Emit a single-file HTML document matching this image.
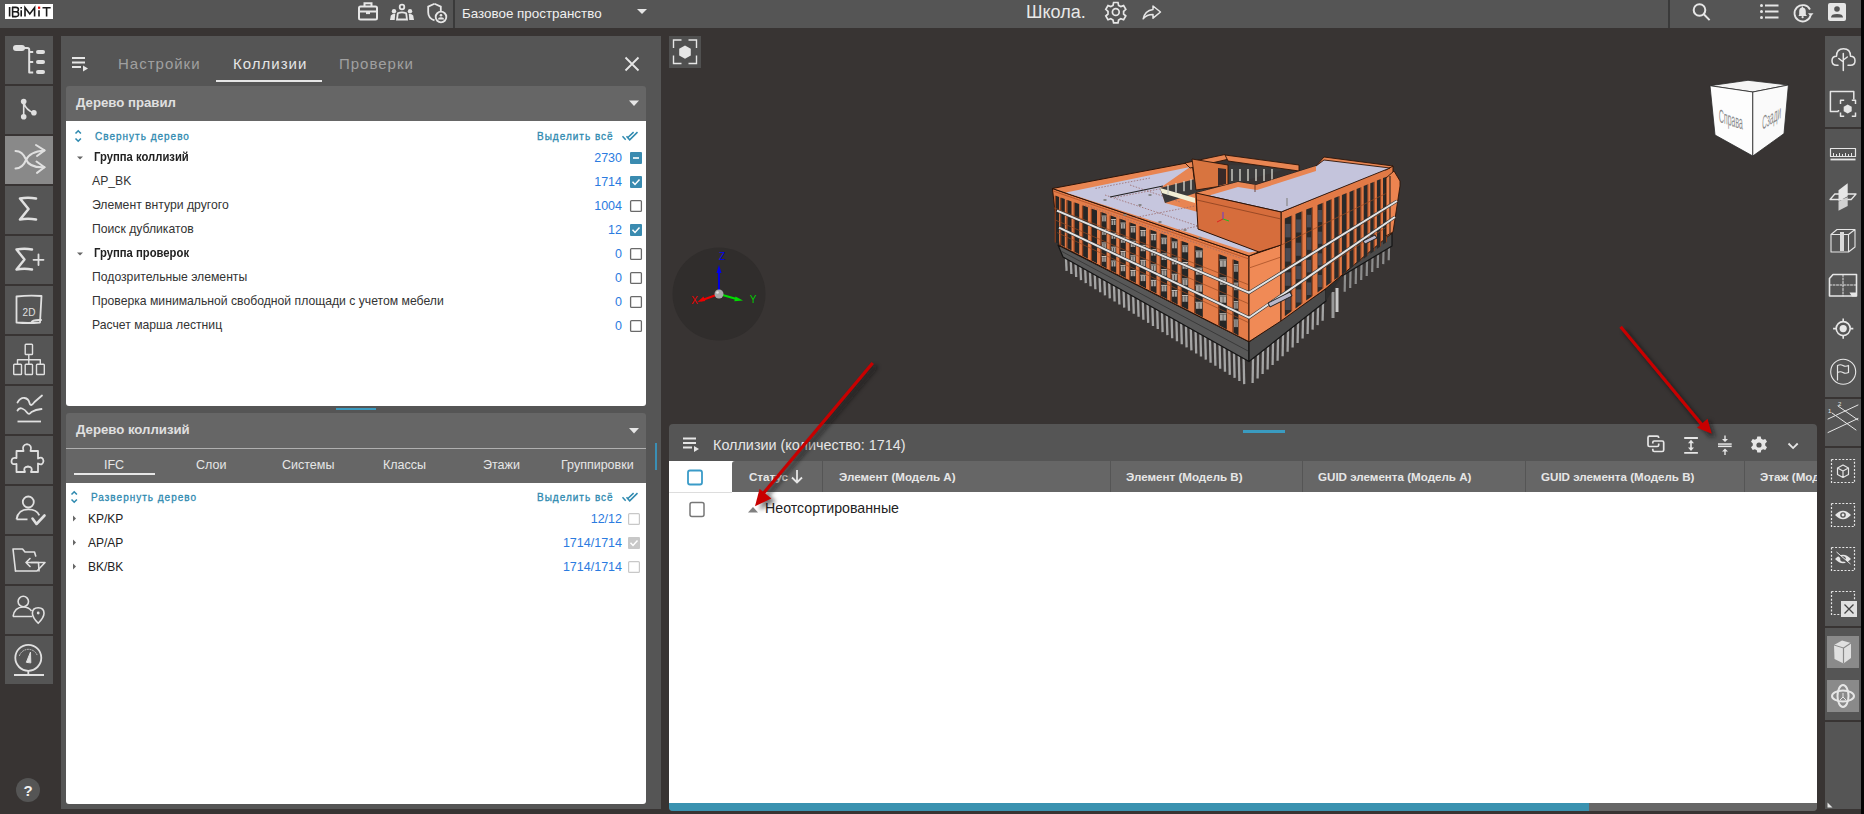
<!DOCTYPE html>
<html><head><meta charset="utf-8">
<style>
*{box-sizing:border-box;margin:0;padding:0}
html,body{width:1864px;height:814px;overflow:hidden}
body{position:relative;background:#383433;font-family:"Liberation Sans",sans-serif;}
.a{position:absolute}
.t{position:absolute;white-space:nowrap;line-height:1}
#top{left:0;top:0;width:1861px;height:28px;background:#555}
#rstrip{left:1861px;top:0;width:3px;height:814px;background:#050505}
.lb{position:absolute;left:5px;width:48px;height:48px;background:#555}
.rb{position:absolute;left:1825px;width:36px;background:#555}
svg{position:absolute;overflow:visible}
</style></head><body>
<div id="top" class="a"></div>
<div id="rstrip" class="a"></div>


<!-- topbar content -->
<div class="a" style="left:5px;top:4px;width:48px;height:15px;background:#fff"></div>
<div class="a" style="left:453px;top:0;width:2px;height:28px;background:#3a3a3a"></div>
<div class="t" style="left:462px;top:7px;font-size:13.4px;color:#f0f0f0">Базовое пространство</div>
<div class="t" style="left:1026px;top:3px;font-size:18px;color:#e8e8e8">Школа.</div>
<div class="a" style="left:1668px;top:0;width:2px;height:28px;background:#3a3a3a"></div>

<!-- left sidebar -->
<div class="lb" style="top:36px"></div>
<div class="lb" style="top:86px"></div>
<div class="lb" style="top:136px;background:#898989"></div>
<div class="lb" style="top:186px"></div>
<div class="lb" style="top:236px"></div>
<div class="lb" style="top:286px"></div>
<div class="lb" style="top:336px"></div>
<div class="lb" style="top:386px"></div>
<div class="lb" style="top:436px"></div>
<div class="lb" style="top:486px"></div>
<div class="lb" style="top:536px"></div>
<div class="lb" style="top:586px"></div>
<div class="lb" style="top:636px"></div>
<div class="a" style="left:16px;top:778px;width:24px;height:24px;border-radius:50%;background:#555"></div>

<!-- left panel -->
<div class="a" style="left:61px;top:36px;width:600px;height:773px;background:#555"></div>
<div class="a" style="left:66px;top:86px;width:580px;height:35px;background:#666;border-radius:3px 3px 0 0"></div>
<div class="a" style="left:66px;top:121px;width:580px;height:285px;background:#fff;border-radius:0 0 3px 3px"></div>
<div class="a" style="left:66px;top:413px;width:580px;height:70px;background:#666;border-radius:3px 3px 0 0"></div>
<div class="a" style="left:66px;top:448px;width:580px;height:1px;background:#b0b0b0"></div>
<div class="a" style="left:66px;top:483px;width:580px;height:321px;background:#fff;border-radius:0 0 3px 3px"></div>


<!-- left panel text -->
<div class="t" style="left:118px;top:56px;font-size:15px;color:#a0a0a0;letter-spacing:1px">Настройки</div>
<div class="t" style="left:233px;top:56px;font-size:15px;color:#e6e6e6;letter-spacing:1px">Коллизии</div>
<div class="t" style="left:339px;top:56px;font-size:15px;color:#a0a0a0;letter-spacing:1px">Проверки</div>
<div class="a" style="left:216px;top:80px;width:106px;height:2px;background:#e6e6e6"></div>
<div class="t" style="left:76px;top:96px;font-size:13.2px;font-weight:bold;color:#e0e0e0">Дерево правил</div>
<div class="t" style="left:95px;top:132px;font-size:10px;color:#2f8ab0;letter-spacing:1px;-webkit-text-stroke:0.3px #2f8ab0">Свернуть дерево</div>
<div class="t" style="left:537px;top:132px;font-size:10px;color:#2f8ab0;letter-spacing:1px;-webkit-text-stroke:0.3px #2f8ab0">Выделить всё</div>
<div class="t" style="left:94px;top:151px;font-size:12.6px;font-weight:bold;color:#222;transform:scaleX(0.895);transform-origin:0 0">Группа коллизий</div>
<div class="t" style="left:92px;top:175px;font-size:12.2px;color:#333">AP_BK</div>
<div class="t" style="left:92px;top:199px;font-size:12.2px;color:#333">Элемент внтури другого</div>
<div class="t" style="left:92px;top:223px;font-size:12.2px;color:#333">Поиск дубликатов</div>
<div class="t" style="left:94px;top:247px;font-size:12.6px;font-weight:bold;color:#222;transform:scaleX(0.895);transform-origin:0 0">Группа проверок</div>
<div class="t" style="left:92px;top:271px;font-size:12.2px;color:#333">Подозрительные элементы</div>
<div class="t" style="left:92px;top:295px;font-size:12.2px;color:#333">Проверка минимальной свободной площади с учетом мебели</div>
<div class="t" style="left:92px;top:319px;font-size:12.2px;color:#333">Расчет марша лестниц</div>
<div class="t" style="left:522px;top:152px;width:100px;text-align:right;font-size:12.5px;color:#2b7be0">2730</div>
<div class="t" style="left:522px;top:176px;width:100px;text-align:right;font-size:12.5px;color:#2b7be0">1714</div>
<div class="t" style="left:522px;top:200px;width:100px;text-align:right;font-size:12.5px;color:#2b7be0">1004</div>
<div class="t" style="left:522px;top:224px;width:100px;text-align:right;font-size:12.5px;color:#2b7be0">12</div>
<div class="t" style="left:522px;top:248px;width:100px;text-align:right;font-size:12.5px;color:#2b7be0">0</div>
<div class="t" style="left:522px;top:272px;width:100px;text-align:right;font-size:12.5px;color:#2b7be0">0</div>
<div class="t" style="left:522px;top:296px;width:100px;text-align:right;font-size:12.5px;color:#2b7be0">0</div>
<div class="t" style="left:522px;top:320px;width:100px;text-align:right;font-size:12.5px;color:#2b7be0">0</div>
<div class="a" style="left:336px;top:408px;width:40px;height:2px;background:#3a9bc0"></div>
<div class="t" style="left:76px;top:423px;font-size:13.2px;font-weight:bold;color:#e0e0e0">Дерево коллизий</div>
<div class="t" style="left:104px;top:459px;font-size:12.5px;color:#e6e6e6">IFC</div>
<div class="t" style="left:196px;top:459px;font-size:12.5px;color:#e6e6e6">Слои</div>
<div class="t" style="left:282px;top:459px;font-size:12.5px;color:#e6e6e6">Системы</div>
<div class="t" style="left:383px;top:459px;font-size:12.5px;color:#e6e6e6">Классы</div>
<div class="t" style="left:483px;top:459px;font-size:12.5px;color:#e6e6e6">Этажи</div>
<div class="t" style="left:561px;top:459px;font-size:12.5px;color:#e6e6e6">Группировки</div>
<div class="a" style="left:74px;top:473px;width:81px;height:2px;background:#e6e6e6"></div>
<div class="t" style="left:91px;top:493px;font-size:10px;color:#2f8ab0;letter-spacing:1px;-webkit-text-stroke:0.3px #2f8ab0">Развернуть дерево</div>
<div class="t" style="left:537px;top:493px;font-size:10px;color:#2f8ab0;letter-spacing:1px;-webkit-text-stroke:0.3px #2f8ab0">Выделить всё</div>
<div class="t" style="left:88px;top:513px;font-size:12px;color:#222">KP/KP</div>
<div class="t" style="left:88px;top:537px;font-size:12px;color:#222">AP/AP</div>
<div class="t" style="left:88px;top:561px;font-size:12px;color:#222">BK/BK</div>
<div class="t" style="left:522px;top:513px;width:100px;text-align:right;font-size:12.5px;color:#2b7be0">12/12</div>
<div class="t" style="left:522px;top:537px;width:100px;text-align:right;font-size:12.5px;color:#2b7be0">1714/1714</div>
<div class="t" style="left:522px;top:561px;width:100px;text-align:right;font-size:12.5px;color:#2b7be0">1714/1714</div>
<div class="a" style="left:655px;top:443px;width:2px;height:27px;background:#3a8fb5"></div>

<!-- viewer buttons -->
<div class="a" style="left:669px;top:36px;width:32px;height:32px;background:#505050"></div>

<!-- table -->
<div class="a" style="left:669px;top:424px;width:1148px;height:387px;background:#555;border-radius:4px 4px 4px 4px;overflow:hidden">
  <div class="a" style="left:0;top:37px;width:1148px;height:342px;background:#fff"></div>
  <div class="a" style="left:63px;top:37px;width:1085px;height:31px;background:#666;border-radius:3px 0 0 0"></div>
  <div class="a" style="left:0;top:68px;width:63px;height:1px;background:#ddd"></div>
  <div class="t" style="left:44px;top:14px;font-size:14.4px;color:#e6e6e6">Коллизии (количество: 1714)</div>
  <div class="t" style="left:80px;top:47px;font-size:11.6px;font-weight:bold;color:#e6e6e6">Статус</div>
  <div class="a" style="left:153px;top:37px;width:1px;height:31px;background:#555"></div>
  <div class="t" style="left:170px;top:47px;font-size:11.6px;font-weight:bold;color:#e6e6e6">Элемент (Модель А)</div>
  <div class="a" style="left:441px;top:37px;width:1px;height:31px;background:#555"></div>
  <div class="t" style="left:457px;top:47px;font-size:11.6px;font-weight:bold;color:#e6e6e6">Элемент (Модель B)</div>
  <div class="a" style="left:633px;top:37px;width:1px;height:31px;background:#555"></div>
  <div class="t" style="left:649px;top:47px;font-size:11.6px;font-weight:bold;color:#e6e6e6">GUID элемента (Модель А)</div>
  <div class="a" style="left:856px;top:37px;width:1px;height:31px;background:#555"></div>
  <div class="t" style="left:872px;top:47px;font-size:11.6px;font-weight:bold;color:#e6e6e6">GUID элемента (Модель B)</div>
  <div class="a" style="left:1075px;top:37px;width:1px;height:31px;background:#555"></div>
  <div class="t" style="left:1091px;top:47px;font-size:11.6px;font-weight:bold;color:#e6e6e6">Этаж (Модель А)</div>
  <div class="t" style="left:96px;top:77px;font-size:14.2px;color:#222">Неотсортированные</div>

  <div class="a" style="left:0;top:379px;width:1148px;height:8px;background:#666"></div>
  <div class="a" style="left:0;top:379px;width:920px;height:8px;background:#3a92b0"></div>
</div>

<!-- right sidebar -->
<div class="rb" style="top:36px;height:91px"></div>
<div class="rb" style="top:129px;height:268px"></div>
<div class="rb" style="top:399px;height:47px"></div>
<div class="rb" style="top:448px;height:178px"></div>
<div class="rb" style="top:628px;height:92px"></div>
<div class="rb" style="top:722px;height:87px"></div>


<svg id="ov" style="left:0;top:0" width="1864" height="814" viewBox="0 0 1864 814">
<defs>
  <filter id="ash" x="-20%" y="-20%" width="140%" height="140%"><feGaussianBlur stdDeviation="2.2"/></filter>
</defs>
<!-- ===== TOP BAR ICONS ===== -->
<g fill="none" stroke="#e6e6e6" stroke-width="2">
  <!-- briefcase -->
  <rect x="359" y="6.5" width="18" height="13" rx="1.5"/>
  <path d="M364.5 6.5V3.2h7V6.5"/>
  <path d="M359 11.5h18"/>
  <rect x="366" y="11.5" width="4" height="2.6" fill="#e6e6e6" stroke="none"/>
  <!-- people -->
  <circle cx="402" cy="7" r="2.3" stroke-width="1.8"/>
  <path d="M397 19.5l0.8-6.2q4.2-2 8.4 0l0.8 6.2z" stroke-width="1.8"/>
  <!-- shield -->
  <path d="M434.5 3.8l-6.3 2.8v5.6c0 4 2.7 7 6.3 8.2" stroke-width="1.8"/>
  <path d="M434.5 3.8l6.3 2.8v4.6" stroke-width="1.8"/>
  <circle cx="441" cy="17" r="5.3" stroke-width="1.8"/>
  <!-- gear outline -->
  <path d="M1113.6 2.5h4.4l0.6 2.9 2.2 1.2 2.8-1 2.2 3.8-2.2 2v2.6l2.2 2-2.2 3.8-2.8-1-2.2 1.2-0.6 2.9h-4.4l-0.6-2.9-2.2-1.2-2.8 1-2.2-3.8 2.2-2v-2.6l-2.2-2 2.2-3.8 2.8 1 2.2-1.2z" stroke-width="1.7"/>
  <circle cx="1115.8" cy="12" r="3.4" stroke-width="1.7"/>
  <!-- search -->
  <circle cx="1699.5" cy="10" r="5.8" stroke-width="2"/>
  <path d="M1703.8 14.3l5.8 5.8" stroke-width="2"/>
  <!-- list -->
  <path d="M1765 5.5h13.5M1765 11.5h13.5M1765 17.5h13.5" stroke-width="2"/>
  <!-- bell circle -->
  <path d="M1810 9.5a8.2 8.2 0 1 0 0.6 6" stroke-width="1.8"/>
</g>
<g fill="#e6e6e6">
  <circle cx="394" cy="11.2" r="2.2"/><circle cx="410" cy="11.2" r="2.2"/>
  <path d="M390 20l0.8-4.6q1-1.6 4.4-1.6l-0.5 6.2z"/>
  <path d="M414 20l-0.8-4.6q-1-1.6-4.4-1.6l0.5 6.2z"/>
  <circle cx="441" cy="15.3" r="1.3"/><path d="M438 19.6q0-2.4 3-2.4t3 2.4z"/>
  <path d="M637 9h10l-5 5z"/>
  <!-- share arrow -->
  <path d="M1153 6l7.5 6-7.5 6.2v-3.6c-4.3 0-7.3 1.2-9.8 4.2 1-5.2 4.2-8.6 9.8-9.4z" fill="none" stroke="#e6e6e6" stroke-width="1.5" stroke-linejoin="round"/>
  <!-- list dots -->
  <circle cx="1761.5" cy="5.5" r="1.5"/><circle cx="1761.5" cy="11.5" r="1.5"/><circle cx="1761.5" cy="17.5" r="1.5"/>
  <!-- bell -->
  <path d="M1798.5 16h8.5l-1.2-1.4v-3.2c0-2-1-3.4-2.8-3.8v-1h-1.2v1c-1.8 0.4-2.6 1.8-2.6 3.8v3.2z"/>
  <circle cx="1802.6" cy="17.2" r="1.1"/>
  <path d="M1808 13.2l5.5 0-2.8 3.4z"/>
  <!-- person square -->
  <rect x="1828" y="3" width="18" height="18" rx="2"/>
</g>
<g fill="#555">
  <circle cx="1837" cy="9" r="2.8"/>
  <path d="M1831 17.5q0-3.4 6-3.4t6 3.4z"/>
</g>

<!-- ===== LEFT SIDEBAR ICONS ===== -->
<g fill="none" stroke="#e0e0e0" stroke-width="2" stroke-linecap="round" stroke-linejoin="round">
 <g transform="translate(5,36)">
  <rect x="8" y="9" width="12" height="6" rx="3" fill="#e0e0e0" stroke="none"/>
  <path d="M19 12h3.5q1.7 0 1.7 1.7V36.5h4M24.2 16h4M24.2 26h4" stroke-linecap="butt"/>
  <rect x="31" y="14" width="9" height="4" rx="2" fill="#e0e0e0" stroke="none"/>
  <rect x="31" y="24" width="9" height="4" rx="2" fill="#e0e0e0" stroke="none"/>
  <rect x="31" y="34" width="9" height="4" rx="2" fill="#e0e0e0" stroke="none"/>
 </g>
 <g transform="translate(5,86)">
  <circle cx="18.7" cy="15.6" r="2.8" fill="#e0e0e0" stroke="none"/>
  <circle cx="18.7" cy="30.7" r="2.8" fill="#e0e0e0" stroke="none"/>
  <circle cx="28.9" cy="26.7" r="2.8" fill="#e0e0e0" stroke="none"/>
  <path d="M18.7 15.6V30.7M18.7 16.5q2.5 8 10 10.2" stroke-width="1.6"/>
 </g>
 <g transform="translate(5,136)" stroke-width="2">
  <path d="M10.5 15q7 0 10.5 8.5T39.5 31.3"/>
  <path d="M10.5 32.5q7 0 10.5-8.5T39.5 14.4"/>
  <path d="M31 9l8.5 5.4-7.5 5.6M31.5 25.5l8 5.8-7.5 5.6"/>
 </g>
 <g transform="translate(5,186)" stroke-width="2.6">
  <path d="M31 12.5Q23 11 15 12.5L23.5 23 15 33.5Q23 32 31 33.5"/>
 </g>
 <g transform="translate(5,236)" stroke-width="2.4">
  <path d="M27 13.5Q19.5 12 11.5 13.5L19.5 23.5 11.5 33.5Q19.5 32 27 33.5"/>
  <path d="M33.5 18.5v10.5M28.5 23.8h10" stroke-width="1.8"/>
 </g>
 <g transform="translate(5,286)" stroke-width="1.8">
  <path d="M11.5 10.5Q24 9 36.5 10L35 36.5Q23 37.5 11.5 36.5z"/>
  <path d="M26.5 36.5q1-3 9.5-2.5" stroke-width="2"/>
 </g>
 <text x="29" y="315.5" font-family="Liberation Sans" font-size="10" fill="#e0e0e0" stroke="none" text-anchor="middle">2D</text>
 <g transform="translate(5,336)" stroke-width="1.4" stroke-linecap="butt">
  <rect x="20.2" y="8.2" width="7.3" height="10.3" rx="0.8"/>
  <path d="M23.8 18.5V28M12.5 28v-4.3h22.8V28"/>
  <rect x="8.7" y="28.2" width="7.8" height="10.3" rx="0.8"/>
  <rect x="20.2" y="28.2" width="7.3" height="10.3" rx="0.8"/>
  <rect x="31.5" y="28.2" width="7.8" height="10.3" rx="0.8"/>
 </g>
 <g transform="translate(5,386)" stroke-width="1.8">
  <path d="M12.5 16.5q3-5 7-4.5t5 5 5-1l7.5-6.5"/>
  <path d="M12.5 24.5q1.5-3 4.5-2t5 4 4.5-0.5q4-2.5 10-3"/>
  <path d="M12.5 35.5h23.5" stroke-linecap="butt"/>
 </g>
 <g transform="translate(5,436)" stroke-width="1.8">
  <path d="M11.5 15h7q-2-6 3.5-6.8 5.5 0.8 3.5 6.8h7.5v7.5q5-2.5 5.5 2.5-0.5 5-5.5 2.5V36H26q2.5-5-3-5.5-5.5 0.5-3 5.5h-8.5v-8q-5.5 1-5-3 0.5-4 5-3z"/>
 </g>
 <g transform="translate(5,486)" stroke-width="1.8">
  <circle cx="23.3" cy="16" r="5.5"/>
  <path d="M11.5 33.3q1.5-10 11.8-10 8.5 0 11 6M11.5 33.3h11" stroke-linecap="butt"/>
  <path d="M27.5 32.5l4 5.5 8-8.5" stroke-width="2.6"/>
 </g>
 <g transform="translate(5,536)" stroke-width="1.6">
  <path d="M10.5 35L8 13h9.5l2.5 3h9.5l1.2 4"/>
  <path d="M10.5 35h21.5l8-8.5H26"/>
  <path d="M33.5 26.5L34 35M32.5 26.5h-11.5M25 22.5l-4 4 4 4"/>
 </g>
 <g transform="translate(5,586)" stroke-width="1.6">
  <circle cx="18.3" cy="15.5" r="5.2"/>
  <path d="M8 30.5q1.5-9.5 10.3-9.5 5.5 0 8.2 4M8 30.5h19" stroke-linecap="butt"/>
  <path d="M33.2 37.3q-5.8-5.8-5.8-10 0-5.5 5.8-5.5t5.8 5.5q0 4.2-5.8 10z"/>
  <circle cx="33.2" cy="27" r="1.4" fill="#e0e0e0" stroke="none"/>
 </g>
 <g transform="translate(5,636)" stroke-width="1.8">
  <circle cx="23.3" cy="21.8" r="13"/>
  <path d="M9 39h30M23.3 35v4" stroke-linecap="butt"/>
  <path d="M14.5 19.5a9.5 9.5 0 0 1 17.8 0" stroke-width="0.8" stroke-dasharray="1 1.6"/>
  <path d="M21.5 26l4-10 0.3 10.5z" fill="#e0e0e0" stroke-width="1"/>
 </g>
</g>
<text x="28" y="796" font-family="Liberation Sans" font-size="15" font-weight="bold" fill="#f0f0f0" text-anchor="middle">?</text>


<!-- ===== PANEL ICONS ===== -->
<g fill="#e6e6e6">
  <!-- menu icons -->
  <path d="M72 57h13v2h-13zM72 61.5h13v2h-13zM72 66h9v2h-9z"/><path d="M83 65.5l5 3-5 3z"/>
  <path d="M683 437.5h13v2h-13zM683 442h13v2h-13zM683 446.5h9v2h-9z"/><path d="M694 446l5 3-5 3z"/>
  <!-- dropdown triangles -->
  <path d="M629 100.5h10l-5 5.5z"/>
  <path d="M629 428h10l-5 5.5z"/>
</g>
<path d="M625.5 57.5l13 13M638.5 57.5l-13 13" stroke="#e6e6e6" stroke-width="1.8" fill="none"/>
<g fill="none" stroke="#2f8ab0" stroke-width="1.6">
  <path d="M75.5 133.5l2.7-2.7 2.7 2.7M75.5 138.5l2.7 2.7 2.7-2.7"/>
  <path d="M71.5 494.5l2.7-2.7 2.7 2.7M71.5 499.5l2.7 2.7 2.7-2.7"/>
  <path d="M622.5 136.3l3.2 3.5M627.6 137.8l6-5.7M626.5 136.3l3.2 3.5 7.8-7.7" stroke-width="1.5"/>
  <path d="M622.5 497.3l3.2 3.5M627.6 498.8l6-5.7M626.5 497.3l3.2 3.5 7.8-7.7" stroke-width="1.5"/>
</g>
<g fill="#666">
  <path d="M77 156.5h6l-3 3z"/>
  <path d="M77 252.5h6l-3 3z"/>
  <path d="M73 515.5v6l3-3z"/>
  <path d="M73 539.5v6l3-3z"/>
  <path d="M73 563.5v6l3-3z"/>
</g>
<!-- checkboxes tree 1 -->
<g>
  <rect x="630" y="152" width="12" height="12" rx="1" fill="#3a8bb0"/>
  <path d="M633 158h6" stroke="#fff" stroke-width="1.6"/>
  <rect x="630" y="176" width="12" height="12" rx="1" fill="#3a8bb0"/>
  <path d="M632.5 181.8l2.5 2.6 4.5-5" stroke="#fff" stroke-width="1.5" fill="none"/>
  <rect x="630" y="224" width="12" height="12" rx="1" fill="#3a8bb0"/>
  <path d="M632.5 229.8l2.5 2.6 4.5-5" stroke="#fff" stroke-width="1.5" fill="none"/>
  <g fill="none" stroke="#6a6a6a" stroke-width="1.3">
   <rect x="630.6" y="200.6" width="10.8" height="10.8" rx="1"/>
   <rect x="630.6" y="248.6" width="10.8" height="10.8" rx="1"/>
   <rect x="630.6" y="272.6" width="10.8" height="10.8" rx="1"/>
   <rect x="630.6" y="296.6" width="10.8" height="10.8" rx="1"/>
   <rect x="630.6" y="320.6" width="10.8" height="10.8" rx="1"/>
  </g>
  <g fill="none" stroke="#c8c8c8" stroke-width="1.2">
   <rect x="628.6" y="513.6" width="10.8" height="10.8" rx="1"/>
   <rect x="628.6" y="561.6" width="10.8" height="10.8" rx="1"/>
  </g>
  <rect x="628" y="537" width="12" height="12" rx="1" fill="#c8c8c8"/>
  <path d="M630.5 542.8l2.5 2.6 4.5-5" stroke="#fff" stroke-width="1.5" fill="none"/>
</g>


<!-- ===== VIEWER ===== -->
<!--BUILDING-->
<g id="building">
<line x1="1066.0" y1="258.7" x2="1066.6" y2="270.9" stroke="#a4a4a4" stroke-width="2.3"/>
<line x1="1070.8" y1="261.4" x2="1071.4" y2="274.0" stroke="#a4a4a4" stroke-width="2.3"/>
<line x1="1075.6" y1="264.1" x2="1076.2" y2="277.0" stroke="#a4a4a4" stroke-width="2.3"/>
<line x1="1080.4" y1="266.8" x2="1081.0" y2="280.1" stroke="#a4a4a4" stroke-width="2.3"/>
<line x1="1085.2" y1="269.5" x2="1085.8" y2="283.1" stroke="#a4a4a4" stroke-width="2.3"/>
<line x1="1090.0" y1="272.2" x2="1090.6" y2="286.2" stroke="#a4a4a4" stroke-width="2.3"/>
<line x1="1094.8" y1="274.9" x2="1095.4" y2="289.3" stroke="#a4a4a4" stroke-width="2.3"/>
<line x1="1099.6" y1="277.6" x2="1100.2" y2="292.3" stroke="#a4a4a4" stroke-width="2.3"/>
<line x1="1104.4" y1="280.3" x2="1105.0" y2="295.4" stroke="#a4a4a4" stroke-width="2.3"/>
<line x1="1109.2" y1="283.0" x2="1109.8" y2="298.4" stroke="#a4a4a4" stroke-width="2.3"/>
<line x1="1114.0" y1="285.7" x2="1114.6" y2="301.5" stroke="#a4a4a4" stroke-width="2.3"/>
<line x1="1118.8" y1="288.3" x2="1119.4" y2="304.5" stroke="#a4a4a4" stroke-width="2.3"/>
<line x1="1123.6" y1="291.0" x2="1124.2" y2="307.6" stroke="#a4a4a4" stroke-width="2.3"/>
<line x1="1128.4" y1="293.7" x2="1129.0" y2="310.7" stroke="#a4a4a4" stroke-width="2.3"/>
<line x1="1133.2" y1="296.4" x2="1133.8" y2="313.7" stroke="#a4a4a4" stroke-width="2.3"/>
<line x1="1138.0" y1="299.1" x2="1138.6" y2="316.8" stroke="#a4a4a4" stroke-width="2.3"/>
<line x1="1142.8" y1="301.8" x2="1143.4" y2="319.8" stroke="#a4a4a4" stroke-width="2.3"/>
<line x1="1147.6" y1="304.5" x2="1148.2" y2="322.9" stroke="#a4a4a4" stroke-width="2.3"/>
<line x1="1152.4" y1="307.2" x2="1153.0" y2="326.0" stroke="#a4a4a4" stroke-width="2.3"/>
<line x1="1157.2" y1="309.9" x2="1157.8" y2="329.0" stroke="#a4a4a4" stroke-width="2.3"/>
<line x1="1162.0" y1="312.6" x2="1162.6" y2="332.1" stroke="#a4a4a4" stroke-width="2.3"/>
<line x1="1166.8" y1="315.3" x2="1167.4" y2="335.1" stroke="#a4a4a4" stroke-width="2.3"/>
<line x1="1171.6" y1="318.0" x2="1172.2" y2="338.2" stroke="#a4a4a4" stroke-width="2.3"/>
<line x1="1176.4" y1="320.7" x2="1177.0" y2="341.2" stroke="#a4a4a4" stroke-width="2.3"/>
<line x1="1181.2" y1="323.4" x2="1181.8" y2="344.3" stroke="#a4a4a4" stroke-width="2.3"/>
<line x1="1186.0" y1="326.1" x2="1186.6" y2="347.4" stroke="#a4a4a4" stroke-width="2.3"/>
<line x1="1190.8" y1="328.8" x2="1191.4" y2="350.4" stroke="#a4a4a4" stroke-width="2.3"/>
<line x1="1195.6" y1="331.5" x2="1196.2" y2="353.5" stroke="#a4a4a4" stroke-width="2.3"/>
<line x1="1200.4" y1="334.2" x2="1201.0" y2="356.5" stroke="#a4a4a4" stroke-width="2.3"/>
<line x1="1205.2" y1="336.9" x2="1205.8" y2="359.6" stroke="#a4a4a4" stroke-width="2.3"/>
<line x1="1210.0" y1="339.6" x2="1210.6" y2="362.7" stroke="#a4a4a4" stroke-width="2.3"/>
<line x1="1214.8" y1="342.3" x2="1215.4" y2="365.7" stroke="#a4a4a4" stroke-width="2.3"/>
<line x1="1219.6" y1="345.0" x2="1220.2" y2="368.8" stroke="#a4a4a4" stroke-width="2.3"/>
<line x1="1224.4" y1="347.7" x2="1225.0" y2="371.8" stroke="#a4a4a4" stroke-width="2.3"/>
<line x1="1229.2" y1="350.4" x2="1229.8" y2="374.9" stroke="#a4a4a4" stroke-width="2.3"/>
<line x1="1234.0" y1="353.1" x2="1234.6" y2="377.9" stroke="#a4a4a4" stroke-width="2.3"/>
<line x1="1238.8" y1="355.8" x2="1239.4" y2="381.0" stroke="#a4a4a4" stroke-width="2.3"/>
<line x1="1243.6" y1="358.5" x2="1244.2" y2="384.1" stroke="#a4a4a4" stroke-width="2.3"/>
<line x1="1253.0" y1="358.4" x2="1252.6" y2="382.9" stroke="#a4a4a4" stroke-width="2.3"/>
<line x1="1258.0" y1="354.4" x2="1257.6" y2="378.5" stroke="#a4a4a4" stroke-width="2.3"/>
<line x1="1263.0" y1="350.5" x2="1262.6" y2="374.0" stroke="#a4a4a4" stroke-width="2.3"/>
<line x1="1268.0" y1="346.6" x2="1267.6" y2="369.6" stroke="#a4a4a4" stroke-width="2.3"/>
<line x1="1273.0" y1="342.6" x2="1272.6" y2="365.1" stroke="#a4a4a4" stroke-width="2.3"/>
<line x1="1278.0" y1="338.7" x2="1277.6" y2="360.7" stroke="#a4a4a4" stroke-width="2.3"/>
<line x1="1283.0" y1="334.8" x2="1282.6" y2="356.3" stroke="#a4a4a4" stroke-width="2.3"/>
<line x1="1288.0" y1="330.9" x2="1287.6" y2="351.8" stroke="#a4a4a4" stroke-width="2.3"/>
<line x1="1293.0" y1="326.9" x2="1292.6" y2="347.4" stroke="#a4a4a4" stroke-width="2.3"/>
<line x1="1298.0" y1="323.0" x2="1297.6" y2="342.9" stroke="#a4a4a4" stroke-width="2.3"/>
<line x1="1303.0" y1="319.1" x2="1302.6" y2="338.5" stroke="#a4a4a4" stroke-width="2.3"/>
<line x1="1308.0" y1="315.1" x2="1307.6" y2="334.0" stroke="#a4a4a4" stroke-width="2.3"/>
<line x1="1313.0" y1="311.2" x2="1312.6" y2="329.6" stroke="#a4a4a4" stroke-width="2.3"/>
<line x1="1318.0" y1="307.3" x2="1317.6" y2="325.1" stroke="#a4a4a4" stroke-width="2.3"/>
<line x1="1323.0" y1="303.4" x2="1322.6" y2="320.7" stroke="#a4a4a4" stroke-width="2.3"/>
<line x1="1333.0" y1="292.0" x2="1333.0" y2="318.0" stroke="#9a9a9a" stroke-width="3"/>
<line x1="1337.0" y1="288.0" x2="1337.0" y2="312.0" stroke="#c8c8c8" stroke-width="3"/>
<line x1="1345.0" y1="274.2" x2="1344.7" y2="291.8" stroke="#8c8c8c" stroke-width="2.2"/>
<line x1="1350.5" y1="270.9" x2="1350.2" y2="287.9" stroke="#8c8c8c" stroke-width="2.2"/>
<line x1="1356.0" y1="267.6" x2="1355.7" y2="283.9" stroke="#8c8c8c" stroke-width="2.2"/>
<line x1="1361.5" y1="264.3" x2="1361.2" y2="280.0" stroke="#8c8c8c" stroke-width="2.2"/>
<line x1="1367.0" y1="261.0" x2="1366.7" y2="276.0" stroke="#8c8c8c" stroke-width="2.2"/>
<line x1="1372.5" y1="257.7" x2="1372.2" y2="272.0" stroke="#8c8c8c" stroke-width="2.2"/>
<line x1="1378.0" y1="254.4" x2="1377.7" y2="268.1" stroke="#8c8c8c" stroke-width="2.2"/>
<line x1="1383.5" y1="251.1" x2="1383.2" y2="264.1" stroke="#8c8c8c" stroke-width="2.2"/>
<line x1="1389.0" y1="247.8" x2="1388.7" y2="260.2" stroke="#8c8c8c" stroke-width="2.2"/>
<polygon points="1058.0,245.0 1249.0,341.7 1249.0,361.5 1063.0,257.0" fill="#585858" stroke="#151515" stroke-width="1.2" stroke-linejoin="round" />
<line x1="1061.0" y1="251.0" x2="1249.0" y2="351.5" stroke="#3a3a3a" stroke-width="1"/>
<polygon points="1249.0,341.7 1326.0,288.5 1326.0,301.0 1249.0,361.5" fill="#4a4a4a" stroke="#151515" stroke-width="1.2" stroke-linejoin="round" />
<polygon points="1342.0,262.0 1392.0,233.0 1392.0,246.0 1342.0,276.0" fill="#4a4a4a" stroke="#151515" stroke-width="1.2" stroke-linejoin="round" />
<polygon points="1326.0,288.5 1342.0,262.0 1342.0,276.0 1326.0,301.0" fill="#2e2e2e" />
<polygon points="1052.4,188.5 1249.0,256.0 1249.0,341.7 1059.0,245.0" fill="#e47c48" stroke="#2e1408" stroke-width="1" stroke-linejoin="round" />
<polygon points="1054.7,195.8 1055.9,195.8 1055.9,242.4 1054.7,242.4" fill="#8c3e1c" />
<polygon points="1055.9,195.8 1059.1,196.9 1059.1,244.1 1055.9,242.4" fill="#262626" />
<polygon points="1060.0,197.7 1061.2,197.7 1061.2,245.1 1060.0,245.1" fill="#8c3e1c" />
<polygon points="1061.2,197.7 1064.8,199.0 1064.8,247.0 1061.2,245.1" fill="#262626" />
<polygon points="1066.3,199.9 1067.5,199.9 1067.5,248.3 1066.3,248.3" fill="#8c3e1c" />
<polygon points="1067.5,199.9 1071.5,201.4 1071.5,250.4 1067.5,248.3" fill="#262626" />
<polygon points="1073.6,202.5 1074.8,202.5 1074.8,252.0 1073.6,252.0" fill="#8c3e1c" />
<polygon points="1074.8,202.5 1079.2,204.1 1079.2,254.3 1074.8,252.0" fill="#262626" />
<polygon points="1081.9,205.5 1083.1,205.5 1083.1,256.3 1081.9,256.3" fill="#8c3e1c" />
<polygon points="1083.1,205.5 1087.9,207.2 1087.9,258.7 1083.1,256.3" fill="#262626" />
<polygon points="1090.8,208.7 1092.0,208.7 1092.0,260.8 1090.8,260.8" fill="#8c3e1c" />
<polygon points="1092.0,208.7 1097.0,210.5 1097.0,263.3 1092.0,260.8" fill="#262626" />
<polygon points="1100.2,212.1 1101.4,212.1 1101.4,265.6 1100.2,265.6" fill="#8c3e1c" />
<polygon points="1101.4,212.1 1106.6,213.9 1106.6,268.2 1101.4,265.6" fill="#262626" />
<rect x="1102.1" y="216.8" width="1.6" height="4.6" fill="#a8a4a0"/>
<rect x="1104.3" y="216.8" width="1.6" height="4.6" fill="#a8a4a0"/>
<rect x="1101.7" y="215.6" width="4.6" height="0.9" fill="#d8d0c8"/>
<rect x="1102.1" y="230.3" width="1.6" height="4.6" fill="#a8a4a0"/>
<rect x="1104.3" y="230.3" width="1.6" height="4.6" fill="#a8a4a0"/>
<rect x="1101.7" y="229.1" width="4.6" height="0.9" fill="#d8d0c8"/>
<rect x="1102.1" y="243.7" width="1.6" height="4.6" fill="#a8a4a0"/>
<rect x="1104.3" y="243.7" width="1.6" height="4.6" fill="#a8a4a0"/>
<rect x="1101.7" y="242.5" width="4.6" height="0.9" fill="#d8d0c8"/>
<rect x="1102.1" y="257.2" width="1.6" height="4.6" fill="#a8a4a0"/>
<rect x="1104.3" y="257.2" width="1.6" height="4.6" fill="#a8a4a0"/>
<rect x="1101.7" y="256.0" width="4.6" height="0.9" fill="#d8d0c8"/>
<polygon points="1109.6,215.4 1110.8,215.4 1110.8,270.4 1109.6,270.4" fill="#8c3e1c" />
<polygon points="1110.8,215.4 1116.2,217.4 1116.2,273.1 1110.8,270.4" fill="#262626" />
<rect x="1111.5" y="220.3" width="1.7" height="4.7" fill="#a8a4a0"/>
<rect x="1113.8" y="220.3" width="1.7" height="4.7" fill="#a8a4a0"/>
<rect x="1111.1" y="219.1" width="4.8" height="0.9" fill="#d8d0c8"/>
<rect x="1111.5" y="234.1" width="1.7" height="4.7" fill="#a8a4a0"/>
<rect x="1113.8" y="234.1" width="1.7" height="4.7" fill="#a8a4a0"/>
<rect x="1111.1" y="232.9" width="4.8" height="0.9" fill="#d8d0c8"/>
<rect x="1111.5" y="247.9" width="1.7" height="4.7" fill="#a8a4a0"/>
<rect x="1113.8" y="247.9" width="1.7" height="4.7" fill="#a8a4a0"/>
<rect x="1111.1" y="246.7" width="4.8" height="0.9" fill="#d8d0c8"/>
<rect x="1111.5" y="261.8" width="1.7" height="4.7" fill="#a8a4a0"/>
<rect x="1113.8" y="261.8" width="1.7" height="4.7" fill="#a8a4a0"/>
<rect x="1111.1" y="260.6" width="4.8" height="0.9" fill="#d8d0c8"/>
<polygon points="1119.0,218.8 1120.2,218.8 1120.2,275.1 1119.0,275.1" fill="#8c3e1c" />
<polygon points="1120.2,218.8 1125.8,220.8 1125.8,278.0 1120.2,275.1" fill="#262626" />
<rect x="1120.9" y="223.8" width="1.8" height="4.8" fill="#a8a4a0"/>
<rect x="1123.3" y="223.8" width="1.8" height="4.8" fill="#a8a4a0"/>
<rect x="1120.5" y="222.6" width="5.0" height="0.9" fill="#d8d0c8"/>
<rect x="1120.9" y="238.0" width="1.8" height="4.8" fill="#a8a4a0"/>
<rect x="1123.3" y="238.0" width="1.8" height="4.8" fill="#a8a4a0"/>
<rect x="1120.5" y="236.8" width="5.0" height="0.9" fill="#d8d0c8"/>
<rect x="1120.9" y="252.2" width="1.8" height="4.8" fill="#a8a4a0"/>
<rect x="1123.3" y="252.2" width="1.8" height="4.8" fill="#a8a4a0"/>
<rect x="1120.5" y="251.0" width="5.0" height="0.9" fill="#d8d0c8"/>
<rect x="1120.9" y="266.4" width="1.8" height="4.8" fill="#a8a4a0"/>
<rect x="1123.3" y="266.4" width="1.8" height="4.8" fill="#a8a4a0"/>
<rect x="1120.5" y="265.2" width="5.0" height="0.9" fill="#d8d0c8"/>
<polygon points="1128.9,222.4 1130.1,222.4 1130.1,280.2 1128.9,280.2" fill="#8c3e1c" />
<polygon points="1130.1,222.4 1135.9,224.4 1135.9,283.1 1130.1,280.2" fill="#262626" />
<rect x="1130.8" y="227.5" width="1.9" height="5.0" fill="#a8a4a0"/>
<rect x="1133.3" y="227.5" width="1.9" height="5.0" fill="#a8a4a0"/>
<rect x="1130.4" y="226.3" width="5.2" height="0.9" fill="#d8d0c8"/>
<rect x="1130.8" y="242.0" width="1.9" height="5.0" fill="#a8a4a0"/>
<rect x="1133.3" y="242.0" width="1.9" height="5.0" fill="#a8a4a0"/>
<rect x="1130.4" y="240.8" width="5.2" height="0.9" fill="#d8d0c8"/>
<rect x="1130.8" y="256.6" width="1.9" height="5.0" fill="#a8a4a0"/>
<rect x="1133.3" y="256.6" width="1.9" height="5.0" fill="#a8a4a0"/>
<rect x="1130.4" y="255.4" width="5.2" height="0.9" fill="#d8d0c8"/>
<rect x="1130.8" y="271.2" width="1.9" height="5.0" fill="#a8a4a0"/>
<rect x="1133.3" y="271.2" width="1.9" height="5.0" fill="#a8a4a0"/>
<rect x="1130.4" y="270.0" width="5.2" height="0.9" fill="#d8d0c8"/>
<polygon points="1138.8,225.9 1140.0,225.9 1140.0,285.2 1138.8,285.2" fill="#8c3e1c" />
<polygon points="1140.0,225.9 1146.0,228.1 1146.0,288.3 1140.0,285.2" fill="#262626" />
<rect x="1140.7" y="231.2" width="2.0" height="5.1" fill="#a8a4a0"/>
<rect x="1143.3" y="231.2" width="2.0" height="5.1" fill="#a8a4a0"/>
<rect x="1140.3" y="230.0" width="5.4" height="0.9" fill="#d8d0c8"/>
<rect x="1140.7" y="246.1" width="2.0" height="5.1" fill="#a8a4a0"/>
<rect x="1143.3" y="246.1" width="2.0" height="5.1" fill="#a8a4a0"/>
<rect x="1140.3" y="244.9" width="5.4" height="0.9" fill="#d8d0c8"/>
<rect x="1140.7" y="261.1" width="2.0" height="5.1" fill="#a8a4a0"/>
<rect x="1143.3" y="261.1" width="2.0" height="5.1" fill="#a8a4a0"/>
<rect x="1140.3" y="259.9" width="5.4" height="0.9" fill="#d8d0c8"/>
<rect x="1140.7" y="276.0" width="2.0" height="5.1" fill="#a8a4a0"/>
<rect x="1143.3" y="276.0" width="2.0" height="5.1" fill="#a8a4a0"/>
<rect x="1140.3" y="274.8" width="5.4" height="0.9" fill="#d8d0c8"/>
<polygon points="1149.3,229.7 1150.5,229.7 1150.5,290.6 1149.3,290.6" fill="#8c3e1c" />
<polygon points="1150.5,229.7 1156.5,231.8 1156.5,293.6 1150.5,290.6" fill="#262626" />
<rect x="1151.2" y="235.1" width="2.0" height="5.2" fill="#a8a4a0"/>
<rect x="1153.8" y="235.1" width="2.0" height="5.2" fill="#a8a4a0"/>
<rect x="1150.8" y="233.9" width="5.4" height="0.9" fill="#d8d0c8"/>
<rect x="1151.2" y="250.4" width="2.0" height="5.2" fill="#a8a4a0"/>
<rect x="1153.8" y="250.4" width="2.0" height="5.2" fill="#a8a4a0"/>
<rect x="1150.8" y="249.2" width="5.4" height="0.9" fill="#d8d0c8"/>
<rect x="1151.2" y="265.7" width="2.0" height="5.2" fill="#a8a4a0"/>
<rect x="1153.8" y="265.7" width="2.0" height="5.2" fill="#a8a4a0"/>
<rect x="1150.8" y="264.5" width="5.4" height="0.9" fill="#d8d0c8"/>
<rect x="1151.2" y="281.1" width="2.0" height="5.2" fill="#a8a4a0"/>
<rect x="1153.8" y="281.1" width="2.0" height="5.2" fill="#a8a4a0"/>
<rect x="1150.8" y="279.9" width="5.4" height="0.9" fill="#d8d0c8"/>
<polygon points="1159.7,233.4 1160.9,233.4 1160.9,295.9 1159.7,295.9" fill="#8c3e1c" />
<polygon points="1160.9,233.4 1167.1,235.6 1167.1,299.0 1160.9,295.9" fill="#262626" />
<rect x="1161.6" y="238.9" width="2.1" height="5.3" fill="#a8a4a0"/>
<rect x="1164.3" y="238.9" width="2.1" height="5.3" fill="#a8a4a0"/>
<rect x="1161.2" y="237.7" width="5.6" height="0.9" fill="#d8d0c8"/>
<rect x="1161.6" y="254.7" width="2.1" height="5.3" fill="#a8a4a0"/>
<rect x="1164.3" y="254.7" width="2.1" height="5.3" fill="#a8a4a0"/>
<rect x="1161.2" y="253.5" width="5.6" height="0.9" fill="#d8d0c8"/>
<rect x="1161.6" y="270.4" width="2.1" height="5.3" fill="#a8a4a0"/>
<rect x="1164.3" y="270.4" width="2.1" height="5.3" fill="#a8a4a0"/>
<rect x="1161.2" y="269.2" width="5.6" height="0.9" fill="#d8d0c8"/>
<rect x="1161.6" y="286.1" width="2.1" height="5.3" fill="#a8a4a0"/>
<rect x="1164.3" y="286.1" width="2.1" height="5.3" fill="#a8a4a0"/>
<rect x="1161.2" y="284.9" width="5.6" height="0.9" fill="#d8d0c8"/>
<polygon points="1170.2,237.2 1171.4,237.2 1171.4,301.2 1170.2,301.2" fill="#8c3e1c" />
<polygon points="1171.4,237.2 1177.6,239.4 1177.6,304.4 1171.4,301.2" fill="#262626" />
<rect x="1172.1" y="242.8" width="2.1" height="5.5" fill="#a8a4a0"/>
<rect x="1174.8" y="242.8" width="2.1" height="5.5" fill="#a8a4a0"/>
<rect x="1171.7" y="241.6" width="5.6" height="0.9" fill="#d8d0c8"/>
<rect x="1172.1" y="258.9" width="2.1" height="5.5" fill="#a8a4a0"/>
<rect x="1174.8" y="258.9" width="2.1" height="5.5" fill="#a8a4a0"/>
<rect x="1171.7" y="257.7" width="5.6" height="0.9" fill="#d8d0c8"/>
<rect x="1172.1" y="275.0" width="2.1" height="5.5" fill="#a8a4a0"/>
<rect x="1174.8" y="275.0" width="2.1" height="5.5" fill="#a8a4a0"/>
<rect x="1171.7" y="273.8" width="5.6" height="0.9" fill="#d8d0c8"/>
<rect x="1172.1" y="291.2" width="2.1" height="5.5" fill="#a8a4a0"/>
<rect x="1174.8" y="291.2" width="2.1" height="5.5" fill="#a8a4a0"/>
<rect x="1171.7" y="290.0" width="5.6" height="0.9" fill="#d8d0c8"/>
<polygon points="1180.6,240.9 1181.8,240.9 1181.8,306.5 1180.6,306.5" fill="#8c3e1c" />
<polygon points="1181.8,240.9 1188.2,243.2 1188.2,309.8 1181.8,306.5" fill="#262626" />
<rect x="1182.5" y="246.7" width="2.2" height="5.6" fill="#a8a4a0"/>
<rect x="1185.3" y="246.7" width="2.2" height="5.6" fill="#a8a4a0"/>
<rect x="1182.1" y="245.5" width="5.8" height="0.9" fill="#d8d0c8"/>
<rect x="1182.5" y="263.2" width="2.2" height="5.6" fill="#a8a4a0"/>
<rect x="1185.3" y="263.2" width="2.2" height="5.6" fill="#a8a4a0"/>
<rect x="1182.1" y="262.0" width="5.8" height="0.9" fill="#d8d0c8"/>
<rect x="1182.5" y="279.7" width="2.2" height="5.6" fill="#a8a4a0"/>
<rect x="1185.3" y="279.7" width="2.2" height="5.6" fill="#a8a4a0"/>
<rect x="1182.1" y="278.5" width="5.8" height="0.9" fill="#d8d0c8"/>
<rect x="1182.5" y="296.2" width="2.2" height="5.6" fill="#a8a4a0"/>
<rect x="1185.3" y="296.2" width="2.2" height="5.6" fill="#a8a4a0"/>
<rect x="1182.1" y="295.0" width="5.8" height="0.9" fill="#d8d0c8"/>
<polygon points="1194.0,245.7 1195.2,245.7 1195.2,313.3 1194.0,313.3" fill="#8c3e1c" />
<polygon points="1195.2,245.7 1202.8,248.4 1202.8,317.2 1195.2,313.3" fill="#262626" />
<rect x="1196.0" y="251.8" width="2.8" height="5.8" fill="#a8a4a0"/>
<rect x="1199.3" y="251.8" width="2.8" height="5.8" fill="#a8a4a0"/>
<rect x="1195.5" y="250.6" width="6.9" height="0.9" fill="#d8d0c8"/>
<rect x="1196.0" y="268.9" width="2.8" height="5.8" fill="#a8a4a0"/>
<rect x="1199.3" y="268.9" width="2.8" height="5.8" fill="#a8a4a0"/>
<rect x="1195.5" y="267.7" width="6.9" height="0.9" fill="#d8d0c8"/>
<rect x="1196.0" y="285.9" width="2.8" height="5.8" fill="#a8a4a0"/>
<rect x="1199.3" y="285.9" width="2.8" height="5.8" fill="#a8a4a0"/>
<rect x="1195.5" y="284.7" width="6.9" height="0.9" fill="#d8d0c8"/>
<rect x="1196.0" y="303.0" width="2.8" height="5.8" fill="#a8a4a0"/>
<rect x="1199.3" y="303.0" width="2.8" height="5.8" fill="#a8a4a0"/>
<rect x="1195.5" y="301.8" width="6.9" height="0.9" fill="#d8d0c8"/>
<polygon points="1218.0,254.3 1219.2,254.3 1219.2,325.6 1218.0,325.6" fill="#8c3e1c" />
<polygon points="1219.2,254.3 1226.8,257.0 1226.8,329.4 1219.2,325.6" fill="#262626" />
<rect x="1220.0" y="260.7" width="2.8" height="6.1" fill="#a8a4a0"/>
<rect x="1223.3" y="260.7" width="2.8" height="6.1" fill="#a8a4a0"/>
<rect x="1219.5" y="259.5" width="6.9" height="0.9" fill="#d8d0c8"/>
<rect x="1220.0" y="278.7" width="2.8" height="6.1" fill="#a8a4a0"/>
<rect x="1223.3" y="278.7" width="2.8" height="6.1" fill="#a8a4a0"/>
<rect x="1219.5" y="277.5" width="6.9" height="0.9" fill="#d8d0c8"/>
<rect x="1220.0" y="296.6" width="2.8" height="6.1" fill="#a8a4a0"/>
<rect x="1223.3" y="296.6" width="2.8" height="6.1" fill="#a8a4a0"/>
<rect x="1219.5" y="295.4" width="6.9" height="0.9" fill="#d8d0c8"/>
<rect x="1220.0" y="314.5" width="2.8" height="6.1" fill="#a8a4a0"/>
<rect x="1223.3" y="314.5" width="2.8" height="6.1" fill="#a8a4a0"/>
<rect x="1219.5" y="313.3" width="6.9" height="0.9" fill="#d8d0c8"/>
<polygon points="1232.3,259.4 1233.5,259.4 1233.5,332.8 1232.3,332.8" fill="#8c3e1c" />
<polygon points="1233.5,259.4 1238.5,261.2 1238.5,335.4 1233.5,332.8" fill="#262626" />
<rect x="1234.2" y="265.5" width="1.5" height="6.3" fill="#a8a4a0"/>
<rect x="1236.3" y="265.5" width="1.5" height="6.3" fill="#a8a4a0"/>
<rect x="1233.8" y="264.3" width="4.4" height="0.9" fill="#d8d0c8"/>
<rect x="1234.2" y="283.9" width="1.5" height="6.3" fill="#a8a4a0"/>
<rect x="1236.3" y="283.9" width="1.5" height="6.3" fill="#a8a4a0"/>
<rect x="1233.8" y="282.7" width="4.4" height="0.9" fill="#d8d0c8"/>
<rect x="1234.2" y="302.4" width="1.5" height="6.3" fill="#a8a4a0"/>
<rect x="1236.3" y="302.4" width="1.5" height="6.3" fill="#a8a4a0"/>
<rect x="1233.8" y="301.2" width="4.4" height="0.9" fill="#d8d0c8"/>
<rect x="1234.2" y="320.8" width="1.5" height="6.3" fill="#a8a4a0"/>
<rect x="1236.3" y="320.8" width="1.5" height="6.3" fill="#a8a4a0"/>
<rect x="1233.8" y="319.6" width="4.4" height="0.9" fill="#d8d0c8"/>
<line x1="1054.1" y1="207.9" x2="1249.0" y2="284.9" stroke="#9a4a22" stroke-width="0.7"/>
<line x1="1055.7" y1="220.2" x2="1249.0" y2="303.9" stroke="#9a4a22" stroke-width="0.7"/>
<line x1="1057.3" y1="232.6" x2="1249.0" y2="322.8" stroke="#9a4a22" stroke-width="0.7"/>
<line x1="1053.0" y1="191.0" x2="1249.0" y2="259.0" stroke="#b85a30" stroke-width="1"/>
<polygon points="1249.0,256.0 1281.0,245.0 1281.0,321.0 1249.0,341.7" fill="#f08a56" stroke="#2e1408" stroke-width="1" stroke-linejoin="round" />
<line x1="1249.0" y1="268.0" x2="1281.0" y2="257.0" stroke="#a85028" stroke-width="0.8"/>
<polygon points="1281.0,212.0 1393.0,166.0 1393.0,172.0 1392.0,233.0 1326.0,288.5 1281.0,321.0" fill="#e27a46" stroke="#2e1408" stroke-width="1" stroke-linejoin="round" />
<polygon points="1291.2,215.8 1292.2,215.4 1292.2,310.8 1291.2,311.5" fill="#8c3e1c" />
<polygon points="1284.8,218.5 1291.2,215.8 1291.2,311.5 1284.8,316.3" fill="#2a2a2a" />
<rect x="1285.3" y="223.9" width="5.3" height="13.5" fill="#4a4a52"/>
<rect x="1285.3" y="248.1" width="5.3" height="13.5" fill="#4a4a52"/>
<rect x="1285.3" y="272.3" width="5.3" height="13.5" fill="#4a4a52"/>
<rect x="1285.3" y="296.5" width="5.3" height="13.5" fill="#4a4a52"/>
<polygon points="1301.5,211.6 1302.5,211.2 1302.5,303.3 1301.5,304.0" fill="#8c3e1c" />
<polygon points="1295.5,214.0 1301.5,211.6 1301.5,304.0 1295.5,308.4" fill="#2a2a2a" />
<rect x="1296.1" y="219.4" width="4.8" height="13.1" fill="#4a4a52"/>
<rect x="1296.1" y="242.7" width="4.8" height="13.1" fill="#4a4a52"/>
<rect x="1296.1" y="266.1" width="4.8" height="13.1" fill="#4a4a52"/>
<rect x="1296.1" y="289.4" width="4.8" height="13.1" fill="#4a4a52"/>
<polygon points="1311.8,207.4 1312.8,207.0 1312.8,295.8 1311.8,296.6" fill="#8c3e1c" />
<polygon points="1306.2,209.6 1311.8,207.4 1311.8,296.6 1306.2,300.6" fill="#2a2a2a" />
<rect x="1306.8" y="214.8" width="4.3" height="12.6" fill="#4a4a52"/>
<rect x="1306.8" y="237.3" width="4.3" height="12.6" fill="#4a4a52"/>
<rect x="1306.8" y="259.8" width="4.3" height="12.6" fill="#4a4a52"/>
<rect x="1306.8" y="282.4" width="4.3" height="12.6" fill="#4a4a52"/>
<polygon points="1322.5,203.0 1323.5,202.5 1323.5,288.0 1322.5,288.7" fill="#8c3e1c" />
<polygon points="1317.5,205.0 1322.5,203.0 1322.5,288.7 1317.5,292.4" fill="#2a2a2a" />
<rect x="1318.1" y="210.0" width="3.8" height="12.1" fill="#4a4a52"/>
<rect x="1318.1" y="231.7" width="3.8" height="12.1" fill="#4a4a52"/>
<rect x="1318.1" y="253.3" width="3.8" height="12.1" fill="#4a4a52"/>
<rect x="1318.1" y="275.0" width="3.8" height="12.1" fill="#4a4a52"/>
<polygon points="1330.8,199.5 1331.8,199.1 1331.8,281.9 1330.8,282.7" fill="#8c3e1c" />
<polygon points="1326.2,201.4 1330.8,199.5 1330.8,282.7 1326.2,286.0" fill="#2a2a2a" />
<polygon points="1338.7,196.3 1339.7,195.9 1339.7,276.2 1338.7,276.9" fill="#8c3e1c" />
<polygon points="1334.3,198.1 1338.7,196.3 1338.7,276.9 1334.3,280.1" fill="#2a2a2a" />
<polygon points="1346.1,193.3 1347.1,192.9 1347.1,270.8 1346.1,271.5" fill="#8c3e1c" />
<polygon points="1341.9,195.0 1346.1,193.3 1346.1,271.5 1341.9,274.6" fill="#2a2a2a" />
<polygon points="1353.5,190.2 1354.5,189.8 1354.5,265.4 1353.5,266.1" fill="#8c3e1c" />
<polygon points="1349.5,191.9 1353.5,190.2 1353.5,266.1 1349.5,269.0" fill="#2a2a2a" />
<polygon points="1360.4,187.4 1361.4,187.0 1361.4,260.3 1360.4,261.1" fill="#8c3e1c" />
<polygon points="1356.6,189.0 1360.4,187.4 1360.4,261.1 1356.6,263.8" fill="#2a2a2a" />
<polygon points="1367.3,184.6 1368.3,184.1 1368.3,255.3 1367.3,256.0" fill="#8c3e1c" />
<polygon points="1363.7,186.0 1367.3,184.6 1367.3,256.0 1363.7,258.7" fill="#2a2a2a" />
<polygon points="1373.7,181.9 1374.7,181.5 1374.7,250.6 1373.7,251.4" fill="#8c3e1c" />
<polygon points="1370.3,183.3 1373.7,181.9 1373.7,251.4 1370.3,253.8" fill="#2a2a2a" />
<polygon points="1380.1,179.3 1381.1,178.9 1381.1,246.0 1380.1,246.7" fill="#8c3e1c" />
<polygon points="1376.9,180.6 1380.1,179.3 1380.1,246.7 1376.9,249.0" fill="#2a2a2a" />
<polygon points="1386.0,176.9 1387.0,176.5 1387.0,241.6 1386.0,242.4" fill="#8c3e1c" />
<polygon points="1383.0,178.1 1386.0,176.9 1386.0,242.4 1383.0,244.6" fill="#2a2a2a" />
<line x1="1281.0" y1="245.2" x2="1392.0" y2="190.5" stroke="#9a4a22" stroke-width="0.7"/>
<line x1="1281.0" y1="270.5" x2="1392.0" y2="207.0" stroke="#9a4a22" stroke-width="0.7"/>
<line x1="1281.0" y1="295.8" x2="1392.0" y2="223.5" stroke="#9a4a22" stroke-width="0.7"/>
<polygon points="1386.0,178.0 1394.0,171.0 1400.0,181.0 1400.0,186.0 1393.0,232.0 1386.0,236.0" fill="#ec8450" stroke="#2e1408" stroke-width="0.9" stroke-linejoin="round" />
<line x1="1390.0" y1="176.0" x2="1390.0" y2="234.0" stroke="#3a2a20" stroke-width="1.2"/>
<polygon points="1052.4,188.5 1192.0,162.0 1196.0,193.0 1198.0,229.0 1260.0,251.5 1249.0,256.0" fill="#e88552" stroke="#2e1408" stroke-width="1" stroke-linejoin="round" />
<polygon points="1066.0,192.5 1190.0,167.0 1160.0,188.0 1165.0,203.0 1198.0,212.0 1198.0,229.0 1258.0,251.0 1249.0,252.5" fill="#c6c6de" />
<line x1="1085.0" y1="205.0" x2="1240.0" y2="258.0" stroke="#9a6a6a" stroke-width="0.8" stroke-dasharray="1.5 1.5"/>
<line x1="1105.0" y1="195.0" x2="1210.0" y2="230.0" stroke="#9a6a6a" stroke-width="0.8" stroke-dasharray="1.5 1.5"/>
<line x1="1130.0" y1="185.0" x2="1180.0" y2="202.0" stroke="#9a6a6a" stroke-width="0.8" stroke-dasharray="1.5 1.5"/>
<line x1="1150.0" y1="178.0" x2="1095.0" y2="188.5" stroke="#9a6a6a" stroke-width="0.8" stroke-dasharray="1.5 1.5"/>
<line x1="1175.0" y1="186.0" x2="1115.0" y2="197.5" stroke="#9a6a6a" stroke-width="0.8" stroke-dasharray="1.5 1.5"/>
<line x1="1200.0" y1="205.0" x2="1130.0" y2="218.5" stroke="#9a6a6a" stroke-width="0.8" stroke-dasharray="1.5 1.5"/>
<line x1="1230.0" y1="220.0" x2="1160.0" y2="233.5" stroke="#9a6a6a" stroke-width="0.8" stroke-dasharray="1.5 1.5"/>
<ellipse cx="1125" cy="215" rx="1.8" ry="1.1" fill="#808080"/>
<ellipse cx="1140" cy="205" rx="1.8" ry="1.1" fill="#808080"/>
<ellipse cx="1160" cy="222" rx="1.8" ry="1.1" fill="#808080"/>
<ellipse cx="1185" cy="230" rx="1.8" ry="1.1" fill="#808080"/>
<ellipse cx="1200" cy="238" rx="1.8" ry="1.1" fill="#808080"/>
<ellipse cx="1105" cy="200" rx="1.8" ry="1.1" fill="#808080"/>
<ellipse cx="1150" cy="195" rx="1.8" ry="1.1" fill="#808080"/>
<line x1="1110.0" y1="197.0" x2="1163.0" y2="186.0" stroke="#202020" stroke-width="1.2"/>
<polygon points="1160.0,188.0 1209.0,175.6 1209.0,190.0 1196.0,193.0 1165.0,203.0" fill="#3a3a3a" />
<polygon points="1226.0,165.0 1297.0,166.0 1240.0,182.0 1226.0,186.0" fill="#3a3a3a" />
<polygon points="1160.0,188.0 1195.0,198.0 1195.0,203.0 1162.0,193.0" fill="#f2efd4" />
<line x1="1168.0" y1="185.0" x2="1168.0" y2="194.4" stroke="#d0d0c8" stroke-width="1.4"/>
<line x1="1176.0" y1="183.0" x2="1176.0" y2="192.8" stroke="#d0d0c8" stroke-width="1.4"/>
<line x1="1184.0" y1="181.0" x2="1184.0" y2="191.2" stroke="#d0d0c8" stroke-width="1.4"/>
<line x1="1191.0" y1="179.2" x2="1191.0" y2="189.8" stroke="#d0d0c8" stroke-width="1.4"/>
<line x1="1232.0" y1="169.0" x2="1232.0" y2="181.0" stroke="#d0d0c8" stroke-width="1.4"/>
<line x1="1240.0" y1="169.0" x2="1240.0" y2="181.0" stroke="#d0d0c8" stroke-width="1.4"/>
<line x1="1248.0" y1="169.0" x2="1248.0" y2="181.0" stroke="#d0d0c8" stroke-width="1.4"/>
<line x1="1256.0" y1="169.0" x2="1256.0" y2="181.0" stroke="#d0d0c8" stroke-width="1.4"/>
<line x1="1264.0" y1="169.0" x2="1264.0" y2="181.0" stroke="#d0d0c8" stroke-width="1.4"/>
<line x1="1272.0" y1="169.0" x2="1272.0" y2="181.0" stroke="#d0d0c8" stroke-width="1.4"/>
<polygon points="1185.0,163.0 1225.0,154.5 1229.0,159.0 1190.0,168.0" fill="#e88552" stroke="#2e1408" stroke-width="0.9" stroke-linejoin="round" />
<polygon points="1192.0,159.0 1228.0,165.0 1228.0,185.0 1196.0,190.0" fill="#d8743f" stroke="#2e1408" stroke-width="0.9" stroke-linejoin="round" />
<polygon points="1218.0,168.0 1226.0,169.0 1226.0,184.0 1218.0,186.0" fill="#3a2a28" />
<polygon points="1225.0,155.0 1299.0,165.0 1299.0,171.0 1228.0,161.0" fill="#e88552" stroke="#2e1408" stroke-width="0.9" stroke-linejoin="round" />
<polygon points="1316.0,166.0 1324.0,157.0 1393.0,166.0 1386.0,170.0 1325.0,162.0" fill="#e88552" stroke="#2e1408" stroke-width="0.9" stroke-linejoin="round" />
<polygon points="1196.0,193.0 1238.0,182.0 1256.0,185.0 1316.0,166.0 1324.0,160.0 1390.0,168.0 1281.0,212.0" fill="#c4c4dc" stroke="#2e1408" stroke-width="0.9" stroke-linejoin="round" />
<polygon points="1196.0,193.0 1238.0,182.0 1256.0,185.0 1316.0,166.0 1316.0,171.0 1257.0,190.0 1238.0,187.0 1204.0,197.0" fill="#e88552" />
<line x1="1255.0" y1="185.0" x2="1255.0" y2="192.0" stroke="#5a2a14" stroke-width="0.8"/>
<polygon points="1196.0,193.0 1281.0,212.0 1281.0,245.0 1259.0,252.0 1198.0,229.0" fill="#d66d3c" stroke="#2e1408" stroke-width="1" stroke-linejoin="round" />
<line x1="1197.0" y1="200.0" x2="1281.0" y2="219.0" stroke="#8a4020" stroke-width="0.8"/>
<line x1="1287.0" y1="198.0" x2="1287.0" y2="206.0" stroke="#888" stroke-width="1.2"/>
<polyline points="1057.0,210.6 1249.0,292.6 1397.0,201.0" fill="none" stroke="#3a3a3a" stroke-width="3.2"/>
<polyline points="1057.0,210.6 1249.0,292.6 1397.0,201.0" fill="none" stroke="#e4e4e4" stroke-width="2"/>
<polyline points="1059.0,227.6 1249.0,317.7 1395.0,217.0" fill="none" stroke="#3a3a3a" stroke-width="3.2"/>
<polyline points="1059.0,227.6 1249.0,317.7 1395.0,217.0" fill="none" stroke="#e4e4e4" stroke-width="2"/>
<polygon points="1268.0,303.0 1290.0,292.0 1292.0,296.0 1270.0,307.0" fill="#b8b8cc" stroke="#222" stroke-width="1" stroke-linejoin="round" />
<polygon points="1363.0,241.0 1375.0,235.0 1377.0,238.0 1365.0,244.0" fill="#b8b8cc" stroke="#222" stroke-width="1" stroke-linejoin="round" />
<line x1="1223.0" y1="219.0" x2="1223.0" y2="212.0" stroke="#6a3cd0" stroke-width="1"/>
<line x1="1223.0" y1="219.0" x2="1217.0" y2="222.0" stroke="#e02020" stroke-width="1"/>
<line x1="1223.0" y1="219.0" x2="1229.0" y2="221.0" stroke="#20c020" stroke-width="1"/>
</g>
<!--/BUILDING-->
<g fill="none" stroke="#e6e6e6" stroke-width="1.6">
  <path d="M673.5 48v-8h8M688.5 40h8v8M696.5 55.5v8h-8M681.5 63.5h-8v-8" stroke-width="1.4"/>
</g>
<path d="M685 45.5l5.8 3.3v6.6l-5.8 3.3-5.8-3.3v-6.6z" fill="#e6e6e6"/>
<!-- gizmo -->
<circle cx="719" cy="294" r="46.5" fill="#302d2c"/>
<path d="M719 294V272" stroke="#0000e0" stroke-width="2"/>
<path d="M719 265l-2.5 8h5z" fill="#0000ee"/>
<path d="M719 294l-18 6.5" stroke="#ee0000" stroke-width="2"/>
<path d="M697.5 302l6-5.5 1.8 4.4z" fill="#ee0000"/>
<path d="M719 294l17.5 5" stroke="#00dd00" stroke-width="2"/>
<path d="M743 300.5l-7.5-4 -1.2 4.8z" fill="#00dd00"/>
<circle cx="719" cy="294" r="4.5" fill="#a8a8a8"/>
<circle cx="717.5" cy="292.5" r="1.3" fill="#e0e0e0"/>
<text x="722" y="260" font-family="Liberation Sans" font-size="10" fill="#0000ee" text-anchor="middle">Z</text>
<text x="694.5" y="303.5" font-family="Liberation Sans" font-size="10" fill="#ee0000" text-anchor="middle">X</text>
<text x="753" y="303" font-family="Liberation Sans" font-size="10" fill="#00cc00" text-anchor="middle">Y</text>
<!-- nav cube -->
<g stroke="#2a2a2a" stroke-width="0.8" stroke-linejoin="round">
  <path d="M1710 85.7L1748 80.3 1788.4 85 1752.8 92z" fill="#f4f4f4"/>
  <path d="M1710 85.7L1752.8 92 1752.8 156 1715 135z" fill="#fdfdfd"/>
  <path d="M1752.8 92L1788.4 85 1784 133.6 1752.8 156z" fill="#fafafa"/>
</g>
<text x="0" y="0" font-family="Liberation Sans" font-size="11" fill="#8a8a8a" transform="matrix(0.63,0.2,0.03,1.7,1719,122)">Справа</text>
<text x="0" y="0" font-family="Liberation Sans" font-size="11" fill="#8a8a8a" transform="matrix(0.6,-0.38,-0.05,1.75,1762,130)">Сзади</text>


<!-- ===== TABLE ICONS ===== -->
<g fill="none" stroke="#e6e6e6" stroke-width="1.6">
  <path d="M1658.7 443.4V445q0 1.5-1.5 1.5h-7.7q-1.5 0-1.5-1.5v-7.3q0-1.5 1.5-1.5h7.7q1.5 0 1.5 1.5v0.3" stroke-width="1.7"/>
  <path d="M1652.8 443.4V442.5q0-1.5 1.5-1.5h7.9q1.5 0 1.5 1.5v7.5q0 1.5-1.5 1.5h-7.9q-1.5 0-1.5-1.5v-1.3" stroke-width="1.7"/>
  
  <path d="M1684.2 438h13.7M1684.2 452.8h13.7" stroke-width="1.8"/>
  <path d="M1691 441.5v7.8" stroke-width="1.6"/>
  <path d="M1788.5 443.5l4.6 4.6 4.6-4.6" stroke-width="1.8"/>
</g>
<g fill="#e6e6e6">
  <path d="M1688 443.2l3-3.5 3 3.5zM1688 447.5l3 3.5 3-3.5z"/>
  <rect x="1718" y="443.3" width="13.7" height="1.5"/><rect x="1718" y="445.6" width="13.7" height="1.5"/>
  <path d="M1724.3 435.5h1.4v3.5h2.3l-3 3-3-3h2.3z"/>
  <path d="M1724.3 455h1.4v-3.5h2.3l-3-3-3 3h2.3z"/>
  <path d="M1757.3 436.5h3.4l0.5 2.3 1.9 1 2.2-0.9 1.7 2.9-1.8 1.6v2.2l1.8 1.6-1.7 2.9-2.2-0.9-1.9 1-0.5 2.3h-3.4l-0.5-2.3-1.9-1-2.2 0.9-1.7-2.9 1.8-1.6v-2.2l-1.8-1.6 1.7-2.9 2.2 0.9 1.9-1z"/>
</g>
<circle cx="1759" cy="445" r="2.6" fill="#555"/>
<!-- table header checkbox & row -->
<rect x="688" y="470.5" width="14" height="14" rx="2" fill="none" stroke="#3a9bc8" stroke-width="1.8"/>
<rect x="690" y="502.5" width="14" height="14" rx="2" fill="none" stroke="#777" stroke-width="1.5"/>
<path d="M748 512.5l5-5.5 5 5.5z" fill="#808080"/>
<path d="M797 470v12M792 477.5l5 5 5-5" fill="none" stroke="#e6e6e6" stroke-width="1.8"/>
<rect x="1243" y="430" width="42" height="3" fill="#3a9bc0"/>

<!-- ===== RIGHT SIDEBAR ICONS ===== -->
<g fill="none" stroke="#e6e6e6" stroke-width="1.5" stroke-linejoin="round" stroke-linecap="round">
  <!-- cloud tree -->
  <path d="M1838 65.2h-1.5q-4.5 0-4.5-4.5 0-4.5 4.5-4.5 0-7.5 7-7.5t7 7.5q4.5 0 4.5 4.5t-4.5 4.5H1848"/>
  <path d="M1843.3 53.5v17M1843.3 62l-4.5-3.5M1843.3 60l4-3"/>
  <!-- screen fit -->
  <path d="M1838.5 111.5h-8.1V91.4h23.4v8" stroke-linecap="butt"/>
  <path d="M1838.5 111.5v-1.5" stroke-linecap="butt"/>
  <path d="M1840.5 104v-3.7h3.7M1851.8 100.3h3.7v3.7M1855.5 112.5v3.7h-3.7M1844.2 116.2h-3.7v-3.7" stroke-linecap="butt"/>
  <!-- ruler -->
  <rect x="1830.5" y="148.5" width="25" height="8" stroke-width="1.2"/>
  <path d="M1833.5 156v-3M1836.5 156v-2M1839.5 156v-3M1842.5 156v-2M1845.5 156v-3M1848.5 156v-2M1851.5 156v-3" stroke-width="1" stroke-linecap="butt"/>
  <path d="M1830.5 159.5h25" stroke-width="1.8" stroke-linecap="butt"/>
  <!-- plane -->
  <path d="M1830 199.5l4.8-5.5h21.2l-4.8 5.5z" stroke-width="1.3"/>
  <!-- section box -->
  <path d="M1831 234.5h17.5v17.5H1831zM1831 234.5l6-5h18v17.5l-6.5 5M1848.5 234.5l6.5-5" stroke-width="1.1"/>
  <!-- floor plan -->
  <path d="M1833 274.5h23.5v21.5h-27v-17.5z" stroke-width="1.6"/>
  <path d="M1829.5 285h27M1843 274.5v21.5" stroke-width="1" stroke-dasharray="2 1.5"/>
  <!-- target -->
  <circle cx="1843.2" cy="328.6" r="7" stroke-width="1.6"/>
  <path d="M1843.2 318.5v3M1843.2 335.7v3M1833.1 328.6h3M1850.3 328.6h3" stroke-width="1.6" stroke-linecap="butt"/>
  <!-- flag circle -->
  <circle cx="1843.2" cy="371.7" r="12.5" stroke-width="1.1"/>
  <path d="M1837.5 380V365.5q3-1.5 5.5 0t5.5 0v7q-3 1.5-5.5 0t-5.5 0" stroke-width="1.2"/>
  <!-- grid axes -->
  <path d="M1828 419l30-14M1828 432.5l30-14M1832 413l24 17M1838 406l20 14" stroke-width="1"/>
</g>
<g fill="#e6e6e6">
  <path d="M1847.7 104.5l4 2.3v4.5l-4 2.3-4-2.3v-4.5z"/>
  <path d="M1847.7 183.3v13l-9.2 5v-11z"/>
  <path d="M1838.5 201.5l9.2-4.5v9l-9.2 4.8z" fill="#d0d0d0"/>
  <path d="M1840 232h4v19h-4z" fill="#d8d8d8"/>
  <circle cx="1843.2" cy="328.6" r="3.6"/>
  <path d="M1852 296.5h4.5v-4h-7z"/>
</g>
<text x="1828" y="413" font-family="Liberation Sans" font-size="6" fill="#e6e6e6">1</text>
<text x="1838" y="406" font-family="Liberation Sans" font-size="6" fill="#e6e6e6">2</text>
<!-- dotted boxes -->
<g fill="none" stroke="#e6e6e6" stroke-width="1.2" stroke-dasharray="2 1.6">
  <rect x="1831.5" y="459.5" width="23" height="23"/>
  <rect x="1831.5" y="503.5" width="23" height="23"/>
  <rect x="1831.5" y="547.5" width="23" height="23"/>
  <rect x="1831.5" y="591.5" width="23" height="23"/>
</g>
<g fill="none" stroke="#e6e6e6" stroke-width="1.2" stroke-linejoin="round">
  <path d="M1843 465l5.5 3v6.5l-5.5 3-5.5-3v-6.5zM1837.5 468l5.5 3 5.5-3M1843 471v6.5"/>
</g>
<g fill="#e6e6e6">
  <path d="M1835 515q8-8.5 16 0-8 8.5-16 0z"/>
  <path d="M1835 559q8-8.5 16 0-8 8.5-16 0z"/>
  <rect x="1841" y="601" width="16" height="16" fill="#e0e0e0"/>
</g>
<circle cx="1843" cy="515" r="2.8" fill="#555"/><circle cx="1843" cy="515" r="1.4" fill="#e6e6e6"/>
<circle cx="1843" cy="559" r="2.8" fill="#555"/>
<path d="M1836 553l14 12" stroke="#555" stroke-width="2.2"/><path d="M1836.5 552l14 12" stroke="#e6e6e6" stroke-width="1"/>
<path d="M1844.5 604.5l9 9M1853.5 604.5l-9 9" stroke="#444" stroke-width="1.3"/>
<!-- light squares -->
<rect x="1827" y="636" width="32" height="32" fill="#8a8a8a"/>
<rect x="1827" y="680" width="32" height="32" fill="#8a8a8a"/>
<path d="M1834 645l8-4.5 9 2.5v15l-7.5 5.5-9-4.5z" fill="#e0e0e0"/>
<path d="M1843.5 663.5v-15.5l7.5-5" fill="none" stroke="#8a8a8a" stroke-width="1.2"/>
<path d="M1834 645l9.5 3" fill="none" stroke="#8a8a8a" stroke-width="1"/>
<g fill="none" stroke="#e6e6e6" stroke-width="2">
  <ellipse cx="1843" cy="696" rx="11" ry="5.5"/>
  <ellipse cx="1843" cy="696" rx="5.5" ry="11"/>
</g>
<path d="M1843 693v4M1843 697l-3 3M1843 697l3 3" stroke="#e6e6e6" stroke-width="1" fill="none"/>
<path d="M1827.5 802.5v5h5z" fill="#e6e6e6"/>

<!-- ===== RED ARROWS ===== -->
<g filter="url(#ash)" opacity="0.55">
  <path d="M876.5 366L764 499" stroke="#111" stroke-width="4"/>
  <path d="M759.5 510l5.5-18 11 9.5z" fill="#111"/>
  <path d="M1624.5 330.5l87 106" stroke="#111" stroke-width="4"/>
  <path d="M1716 438l-16-9.5 10-8.5z" fill="#111"/>
</g>
<path d="M872.7 363L762 495" stroke="#c80000" stroke-width="3.2"/>
<path d="M755 506.3l4.6-17.5 11.8 9.8z" fill="#c80000"/>
<path d="M1620.6 326.7L1703 426" stroke="#c80000" stroke-width="3.2"/>
<path d="M1711.8 433.8L1697 427.8 1707.5 418.7z" fill="#c80000"/>

<!-- logo -->
<g fill="none" stroke="#1a1a1a" stroke-width="1.6">
 <path d="M9.6 7v9.5M12.6 7v9.5M12 7.4h3.8q2.6 0 2.6 2.2t-2.6 2.2H12M12 11.8h4q2.6 0 2.6 2.4t-2.6 2.4h-4M25 16.5V7.6l4.8 6.4 4.8-6.4V16.5M42.5 7.8h8.2M46.6 7.8v8.7"/>
 <path d="M21.2 10.2v6.3M39 10.2v6.3"/>
</g>
<rect x="20.4" y="7" width="1.6" height="1.6" fill="#1a1a1a"/>
<rect x="38" y="6.6" width="2.2" height="2.2" fill="#e00"/>
</svg>

</body></html>
